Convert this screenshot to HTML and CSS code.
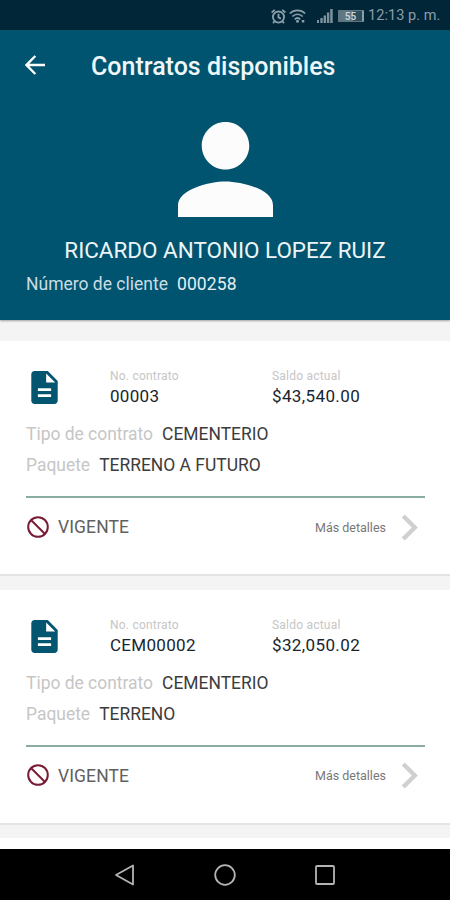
FILE: index.html
```html
<!DOCTYPE html>
<html lang="es">
<head>
<meta charset="utf-8">
<title>Contratos disponibles</title>
<link rel="stylesheet" href="styles.css">
</head>
<body>
<svg class="defs" width="0" height="0">
  <symbol id="doc" viewBox="4 2 16 20"><path d="M14 2H6c-1.1 0-2 .9-2 2v16c0 1.1.9 2 2 2h12c1.1 0 2-.9 2-2V8l-6-6zm2 15.800H8v-1.700h8v1.700zm0-3.700H8v-1.700h8v1.700zm-3-5.100V3.500L18.500 9H13z"/></symbol>
  <symbol id="ban" viewBox="0 0 22 22"><g fill="none" stroke="currentColor" stroke-width="2"><circle cx="11" cy="11" r="9.800"/><path d="M4 4l14 14"/></g></symbol>
  <symbol id="chev" viewBox="0 0 18 28"><path d="M2 2l12 12L2 26" fill="none" stroke="currentColor" stroke-width="4.500"/></symbol>
</svg>
<div class="phone">
  <div class="status">
    <svg class="alarm" viewBox="0 0 14 14"><g fill="none" stroke="currentColor" stroke-width="1.700"><circle cx="7" cy="7.500" r="5.200"/><path d="M7 4.500v3.300l2.200 1.200M.6 3.300L3.500 .8M13.400 3.300L10.500 .8M3.200 11.500l-1.200 1.800M10.800 11.500l1.200 1.800"/></g></svg>
    <svg class="wifi" viewBox="0 0 17 14"><g fill="none" stroke="currentColor" stroke-width="1.700"><path d="M.8 4.500C5 .2 12 .2 16.200 4.500M3.300 7.500c3-3 7.400-3 10.400 0M5.700 10.300c1.700-1.600 3.900-1.600 5.600 0"/></g><circle cx="8.500" cy="12.300" r="1.500" fill="currentColor"/><path d="M12.800 11h2.500v2.500h-2.500z" fill="currentColor"/></svg>
    <svg class="signal" viewBox="0 0 16 14"><path fill="currentColor" d="M0 11h2v3H0zM3.300 9h2.400v5H3.300zM6.600 6.500H9V14H6.600zM9.900 3.500h2.400V14H9.900zM13.200 0h2.500v14h-2.500z"/></svg>
    <span class="battery"><span>55</span></span>
    <span class="time">12:13 p. m.</span>
  </div>
  <header class="hero">
    <div class="bar">
      <svg class="back" viewBox="0 0 20 20"><path d="M20 10H1.500M10.300 1L1.500 10l8.800 9" fill="none" stroke="#fff" stroke-width="2.400"/></svg>
      <h1>Contratos disponibles</h1>
    </div>
    <svg class="avatar" viewBox="4 4 16 16"><path fill="#fcfcfc" d="M12 12c2.210 0 4-1.790 4-4s-1.790-4-4-4-4 1.790-4 4 1.790 4 4 4zm0 2c-2.670 0-8 1.340-8 4v2h16v-2c0-2.660-5.330-4-8-4z"/></svg>
    <div class="name">RICARDO ANTONIO LOPEZ RUIZ</div>
    <div class="client"><span>Número de cliente</span><b>000258</b></div>
  </header>
  <main class="list">
    <article class="card">
      <div class="top">
        <svg class="doc"><use href="#doc"/></svg>
        <div class="col"><small>No. contrato</small><strong class="num">00003</strong></div>
        <div class="col"><small>Saldo actual</small><strong class="money">$43,540.00</strong></div>
      </div>
      <div class="row type"><span>Tipo de contrato</span><em>CEMENTERIO</em></div>
      <div class="row pack"><span>Paquete</span><em>TERRENO A FUTURO</em></div>
      <div class="foot">
        <svg class="ban"><use href="#ban"/></svg><span class="state">VIGENTE</span>
        <span class="more">Más detalles</span><svg class="chev"><use href="#chev"/></svg>
      </div>
    </article>
    <article class="card">
      <div class="top">
        <svg class="doc"><use href="#doc"/></svg>
        <div class="col"><small>No. contrato</small><strong class="num">CEM00002</strong></div>
        <div class="col"><small>Saldo actual</small><strong class="money">$32,050.02</strong></div>
      </div>
      <div class="row type"><span>Tipo de contrato</span><em>CEMENTERIO</em></div>
      <div class="row pack"><span>Paquete</span><em>TERRENO</em></div>
      <div class="foot">
        <svg class="ban"><use href="#ban"/></svg><span class="state">VIGENTE</span>
        <span class="more">Más detalles</span><svg class="chev"><use href="#chev"/></svg>
      </div>
    </article>
    <article class="card"></article>
  </main>
  <nav class="nav">
    <svg viewBox="0 0 22 22"><path d="M19 1.500v19L2 11z"/></svg>
    <svg viewBox="0 0 22 22"><circle cx="11" cy="11" r="9.800"/></svg>
    <svg viewBox="0 0 22 22"><rect x="2" y="2" width="18" height="18" rx="1"/></svg>
  </nav>
</div>
</body>
</html>
```
FILE: styles.css
```css
* { box-sizing: border-box; }
body { margin: 0; font-family: Roboto, sans-serif; background: #f4f4f4; }
svg { display: block; flex: none; }
.defs { position: absolute; }
.phone { width: 450px; height: 900px; display: flex; flex-direction: column; overflow: hidden; }

.status { height: 30px; flex: none; background: #002638; color: #8b9fa9; display: flex; align-items: center; justify-content: flex-end; padding: 2px 10px 0 0; }
.alarm { width: 15px; height: 15px; margin-right: 3px; }
.wifi { width: 17px; height: 14px; margin-right: 11px; }
.signal { width: 16px; height: 14px; margin-right: 5px; color: #7d929b; }
.battery { width: 26px; height: 12px; display: flex; align-items: center; justify-content: center; margin-right: 4px; background: linear-gradient(90deg, #5f7883 62%, #2e4d5b 62%); border: 1px solid #60757f; border-right: 2px solid #8b9fa9; border-radius: 1px; color: #cfd9dd; font-size: 10px; font-weight: 500; }
.time { width: 72px; font-size: 14.500px; line-height: 20px; letter-spacing: .05px; white-space: nowrap; }

.hero { height: 290px; flex: none; background: #00546f; color: #fff; display: flex; flex-direction: column; box-shadow: 0 1px 2px rgba(0,0,0,.35); position: relative; }
.bar { height: 74px; display: flex; align-items: center; padding-left: 25px; }
.back { width: 20px; height: 20px; margin: -4px 46px 0 0; }
h1 { margin: 0; font-size: 25px; font-weight: 500; line-height: 30px; white-space: nowrap; color: #f0f7fa; }
.avatar { width: 95px; height: 95px; margin: 18px auto 0 178px; }
.name { margin-top: 18px; text-align: center; font-size: 22.450px; line-height: 30px; color: #eef5f8; white-space: nowrap; }
.client { display: flex; gap: 9px; padding-left: 26px; margin-top: 8px; font-size: 17.500px; line-height: 22px; color: #c9dde4; white-space: nowrap; }
.client b { font-weight: 400; color: #e4eff3; letter-spacing: .1px; }

.list { flex: 1; min-height: 0; overflow: hidden; padding-top: 21px; display: flex; flex-direction: column; gap: 13.500px; }
.card { height: 235px; flex: none; background: #fff; padding: 26px 25px 0 26px; border-bottom: 2px solid #e4e4e4; }
.top { display: grid; grid-template-columns: 84px 162px 1fr; height: 54px; }
.doc { width: 27px; height: 33px; margin: 4px 0 0 5px; fill: #045570; }
.col { display: flex; flex-direction: column; white-space: nowrap; }
.col small { font-size: 12px; line-height: 16px; margin-top: 1px; letter-spacing: .22px; color: #c6c6c6; }
.col strong { font-size: 17px; line-height: 22px; margin-top: 1px; font-weight: 400; color: #17262e; }
.num { letter-spacing: .3px; }
.money { letter-spacing: .38px; }
.row { display: flex; gap: 9px; height: 31px; font-size: 17.450px; line-height: 26px; color: #c6c6c6; white-space: nowrap; }
.row em { font-style: normal; color: #3c3c3c; }
.foot { border-top: 2px solid #8aaca3; margin-top: 13px; height: 60px; display: flex; align-items: center; }
.ban { width: 22px; height: 22px; margin: -1px 9px 0 1px; color: #781c36; }
.state { font-size: 17.500px; letter-spacing: .1px; color: #606060; flex: 1; }
.more { font-size: 12.500px; color: #777; margin-right: 15px; }
.chev { width: 18px; height: 27px; color: #d0d0d0; margin-right: 6px; }

.nav { height: 51px; flex: none; background: #000; display: flex; justify-content: center; align-items: center; gap: 78px; }
.nav svg { width: 22px; height: 22px; fill: none; stroke: #b4b4b4; stroke-width: 1.800; stroke-linejoin: round; }
```
